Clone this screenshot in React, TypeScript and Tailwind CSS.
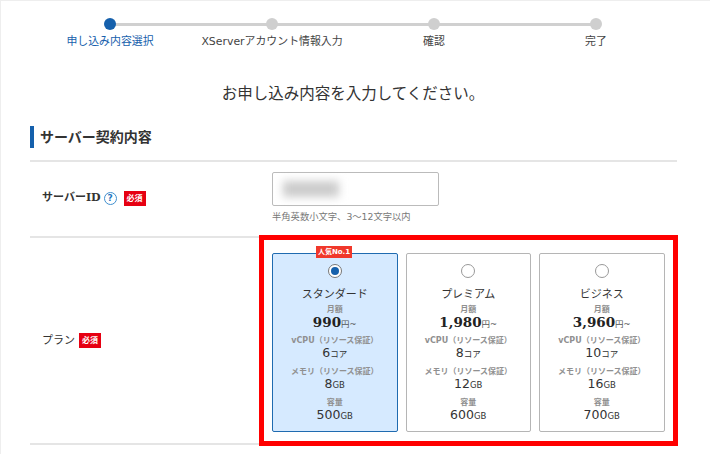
import React from 'react';

const steps = ['申し込み内容選択', 'XServerアカウント情報入力', '確認', '完了'];

const plans = [
  { name: 'スタンダード', price: '990', core: '6', mem: '8', disk: '500', selected: true },
  { name: 'プレミアム', price: '1,980', core: '8', mem: '12', disk: '600', selected: false },
  { name: 'ビジネス', price: '3,960', core: '10', mem: '16', disk: '700', selected: false },
];

const Required = () => (
  <span className="flex h-[15px] w-[22px] items-center justify-center bg-[#e60012] text-[8px] font-bold leading-none text-white">
    必須
  </span>
);

const Spec = ({ label, value, unit }: { label: string; value: string; unit: string }) => (
  <div className="flex flex-col items-center">
    <div className="h-[14px] text-[8px] font-bold leading-[14px] text-[#909090]">{label}</div>
    <div className="flex h-[10px] items-baseline text-[12.5px] leading-[10px] text-[#333]">
      {value}
      <span className="text-[8.5px]">{unit}</span>
    </div>
  </div>
);

const PlanCard = ({ plan }: { plan: (typeof plans)[number] }) => (
  <div
    className={`relative flex h-[179px] w-[125.5px] flex-col items-center rounded-[2px] border pt-[10px] ${
      plan.selected ? 'border-[#1f6bb0] bg-[#d6eaff]' : 'border-[#b5b5b5] bg-white'
    }`}
  >
    {plan.selected && (
      <span className="absolute top-[-8px] left-[43px] flex h-[12px] w-[36px] items-center justify-center bg-[#f0382b] text-[7px] font-bold leading-none text-white">
        人気No.1
      </span>
    )}
    <span
      className={`flex h-[14px] w-[14px] items-center justify-center rounded-full border ${
        plan.selected ? 'border-[#777]' : 'border-[#999]'
      } bg-white`}
    >
      {plan.selected && <span className="h-[8px] w-[8px] rounded-full bg-[#1560ac]" />}
    </span>
    <div className="mt-[8px] h-[17px] text-[11px] leading-[18px] text-[#333]">{plan.name}</div>
    <div className="h-[14px] text-[8px] font-bold leading-[14px] text-[#909090]">月額</div>
    <div className="flex h-[10px] items-baseline leading-[10px] text-[#222]">
      <span className="font-['DejaVu_Serif',serif] text-[13.5px] font-bold">{plan.price}</span>
      <span className="text-[8.5px] text-[#555]">円~</span>
    </div>
    <div className="mt-[7px] flex flex-col gap-[7px]">
      <Spec label="vCPU（リソース保証）" value={plan.core} unit="コア" />
      <Spec label="メモリ（リソース保証）" value={plan.mem} unit="GB" />
      <Spec label="容量" value={plan.disk} unit="GB" />
    </div>
  </div>
);

export default function App() {
  return (
    <div className="relative h-[454px] w-[710px] overflow-hidden border-t border-l border-[#eee] bg-white font-['DejaVu_Sans','Noto_Sans_CJK_JP',sans-serif] text-[#333]">
      <div className="ml-[28px] grid w-[648px] grid-cols-4 pt-[17px]">
        {steps.map((step, i) => (
          <div key={step} className="relative flex flex-col items-center">
            {i < steps.length - 1 && (
              <span className="absolute top-[4.5px] left-1/2 h-[3px] w-full bg-[#d0d0d0]" />
            )}
            <span className={`relative h-[12px] w-[12px] rounded-full ${i === 0 ? 'bg-[#1560ac]' : 'bg-[#cfcfcf]'}`} />
            <span className={`mt-[4px] text-[10.9px] leading-[16px] whitespace-nowrap ${i === 0 ? 'text-[#1560ac]' : 'text-[#444]'}`}>
              {step}
            </span>
          </div>
        ))}
      </div>

      <h1 className="mt-[33px] pr-[5px] text-center text-[15.5px] leading-[22px] text-[#333]">
        お申し込み内容を入力してください。
      </h1>

      <div className="mx-[29px] mt-[21px] w-[647px]">
        <div className="flex h-[22px] items-center border-l-[4px] border-[#1560ac] pl-[6px] text-[14px] font-bold text-[#333]">
          サーバー契約内容
        </div>
        <div className="mt-[12px] flex h-[78px] border-t-2 border-b-2 border-[#e5e5e5]">
          <div className="flex w-[242px] items-center pb-[1px] pl-[12px]">
            <span className="text-[11px] font-bold text-[#333]">
              サーバー<span className="font-['DejaVu_Serif',serif]">ID</span>
            </span>
            <span className="mr-[7px] ml-[3px] flex h-[13px] w-[13px] items-center justify-center rounded-full border border-[#3f8fcf] text-[9px] font-bold leading-none text-[#1f78c1]">
              ?
            </span>
            <Required />
          </div>
          <div className="pt-[10px]">
            <div className="flex h-[34px] w-[167px] items-center rounded-[2px] border border-[#bbb] pl-[10px]">
              <div className="h-[16px] w-[56px] bg-[#ccc] blur-[4px]" />
            </div>
            <div className="mt-[4px] text-[9.3px] leading-[14px] text-[#777]">半角英数小文字、3〜12文字以内</div>
          </div>
        </div>
        <div className="flex h-[207px] border-b-2 border-[#e5e5e5]">
          <div className="flex w-[242px] items-center gap-[4px] pl-[12px]">
            <span className="pt-[1px] text-[11px] text-[#333]">プラン</span>
            <Required />
          </div>
          <div className="flex gap-[8px] pt-[15px]">
            {plans.map(plan => (
              <PlanCard key={plan.name} plan={plan} />
            ))}
          </div>
        </div>
      </div>

      {/* annotation frame drawn over the form */}
      <div className="pointer-events-none absolute top-[234px] left-[258px] h-[211px] w-[419px] border-[5px] border-[#ff0000]" />
    </div>
  );
}
